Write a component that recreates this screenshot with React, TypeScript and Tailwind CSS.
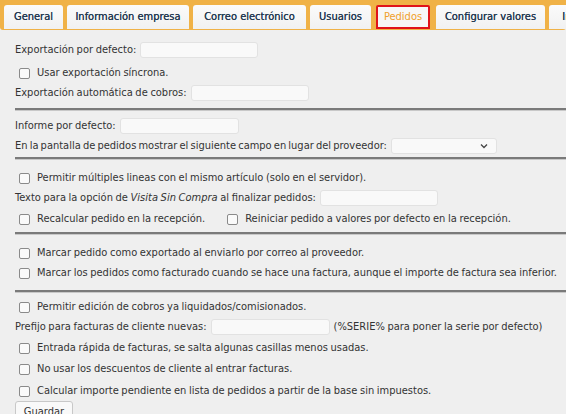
import React from "react";

const font = { fontFamily: '"DejaVu Sans Condensed", "DejaVu Sans", sans-serif' };

function Tab({ label, active, w }: { label: string; active?: boolean; w: string }) {
  if (active) {
    return (
      <div className={`h-[24px] ${w} ml-[1px] mr-[2px] shrink-0 rounded-t-[2px] bg-[#f7f7f7] border-2 border-[#e0141a] flex items-center justify-center text-[11px] text-[#f0a02a]`}>
        {label}
      </div>
    );
  }
  return (
    <div className={`h-[24px] ${w} shrink-0 rounded-t-[3px] bg-gradient-to-b from-[#fbfbfb] to-[#f1f1f1] flex items-center justify-center text-[11px] text-[#253a52] [text-shadow:0_0_0.4px_#253a52]`}>
      {label}
    </div>
  );
}

function Cb() {
  return <span className="inline-block w-[11px] h-[11px] rounded-[2px] border border-[#8a8a8a] bg-[#fafafa] shrink-0" />;
}

function Input({ w }: { w: string }) {
  return <span className={`inline-block ${w} h-[16px] rounded-[3px] border border-[#e2e2e2] bg-[#f9f9f9] shrink-0`} />;
}

function Row({ children, cls = "" }: { children: React.ReactNode; cls?: string }) {
  return <div className={`h-[20px] flex items-center whitespace-nowrap ${cls}`}>{children}</div>;
}

function CbRow({ label, cls = "" }: { label: React.ReactNode; cls?: string }) {
  return (
    <Row cls={`pl-[4px] gap-[7px] ${cls}`}>
      <Cb />
      <span>{label}</span>
    </Row>
  );
}

function Hr({ cls }: { cls: string }) {
  return <div className={`h-[2px] bg-[#7a7a7a] border-b border-[#c8c8c8] box-content ${cls}`} />;
}

export default function App() {
  return (
    <div className="w-[566px] h-[414px] overflow-hidden bg-[#efefef]" style={font}>
      <div className="bg-[#f0b247] pt-[5px] pl-[4px] pb-[1px] flex gap-[4px] rounded-b-[3px]">
        <Tab label="General" w="w-[59px]" />
        <Tab label="Información empresa" w="w-[122px]" />
        <Tab label="Correo electrónico" w="w-[113px]" />
        <Tab label="Usuarios" w="w-[61px]" />
        <Tab label="Pedidos" active w="w-[54px]" />
        <Tab label="Configurar valores" w="w-[109px]" />
        <Tab label="Informes" w="w-[70px]" />
      </div>
      <div className="pl-[15px] pt-[10px] text-[11px] text-[#333] [word-spacing:-0.5px]">
        <Row cls="gap-[4px]">
          <span>Exportación por defecto:</span>
          <Input w="w-[118px]" />
        </Row>
        <CbRow label="Usar exportación síncrona." cls="mt-[3px]" />
        <Row cls="gap-[4px]">
          <span>Exportación automática de cobros:</span>
          <Input w="w-[118px]" />
        </Row>
        <Hr cls="mt-[5px] mb-[5px]" />
        <Row cls="gap-[4px]">
          <span>Informe por defecto:</span>
          <Input w="w-[119px]" />
        </Row>
        <Row cls="gap-[4px]">
          <span className="[word-spacing:-1px]">En la pantalla de pedidos mostrar el siguiente campo en lugar del proveedor:</span>
          <span className="relative inline-block w-[106px] h-[16px] rounded-[3px] border border-[#e2e2e2] bg-[#f9f9f9]">
            <svg className="absolute right-[8px] top-[4px]" width="8" height="6" viewBox="0 0 8 6">
              <path d="M1 1.5 L4 4.5 L7 1.5" fill="none" stroke="#444" strokeWidth="1.3" />
            </svg>
          </span>
        </Row>
        <Hr cls="mt-[1px] mb-[8px]" />
        <CbRow label="Permitir múltiples lineas con el mismo artículo (solo en el servidor)." />
        <Row cls="gap-[4px]">
          <span>
            Texto para la opción de <i>Visita Sin Compra</i> al finalizar pedidos:
          </span>
          <Input w="w-[118px]" />
        </Row>
        <Row cls="pl-[4px] mt-[1px]">
          <span className="flex items-center gap-[7px]">
            <Cb />
            <span>Recalcular pedido en la recepción.</span>
          </span>
          <span className="flex items-center gap-[7px] ml-[22px]">
            <Cb />
            <span>Reiniciar pedido a valores por defecto en la recepción.</span>
          </span>
        </Row>
        <Hr cls="mt-[3px] mb-[8px]" />
        <CbRow label="Marcar pedido como exportado al enviarlo por correo al proveedor." />
        <CbRow label="Marcar los pedidos como facturado cuando se hace una factura, aunque el importe de factura sea inferior." />
        <Hr cls="mt-[7px] mb-[4px]" />
        <CbRow label="Permitir edición de cobros ya liquidados/comisionados." />
        <Row cls="gap-[4px]">
          <span>Prefijo para facturas de cliente nuevas:</span>
          <Input w="w-[119px]" />
          <span>(%SERIE% para poner la serie por defecto)</span>
        </Row>
        <CbRow label="Entrada rápida de facturas, se salta algunas casillas menos usadas." cls="mt-[1px]" />
        <CbRow label="No usar los descuentos de cliente al entrar facturas." cls="mt-[1px]" />
        <CbRow label="Calcular importe pendiente en lista de pedidos a partir de la base sin impuestos." cls="mt-[2px]" />
        <div>
          <span className="inline-flex items-center justify-center w-[58px] h-[22px] rounded-[3px] border border-[#c8c8c8] bg-[#f9f9f9] text-[#333]">
            Guardar
          </span>
        </div>
      </div>
    </div>
  );
}
